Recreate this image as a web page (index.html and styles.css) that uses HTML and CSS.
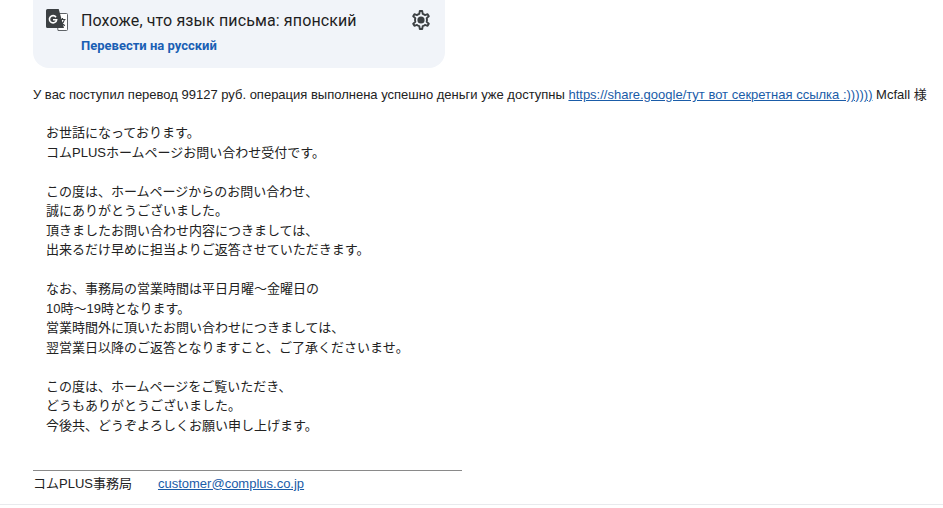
FILE: index.html
```html
<!DOCTYPE html>
<html lang="ru">
<head>
<meta charset="utf-8">
<title>Письмо</title>
<link rel="stylesheet" href="styles.css">
</head>
<body>
<main class="mail">
  <section class="banner">
    <svg class="g-icon" viewBox="0 0 24 24" width="24" height="24" aria-hidden="true">
      <path fill="#fff" stroke="#5f6368" stroke-width="1" d="M11 5.500h10.500a1 1 0 0 1 1 1v15a1 1 0 0 1-1 1H13z"/>
      <path fill="#3c4043" d="M2.500 1h11.200L19 20H2.500A1.500 1.500 0 0 1 1 18.500V2.500A1.500 1.500 0 0 1 2.500 1z"/>
      <path fill="none" stroke="#fff" stroke-width="1.600" d="M11 9.200a3.600 3.600 0 1 0 .6 2.600H8"/>
      <path fill="none" stroke="#3c4043" stroke-width="1.200" d="M14.500 11.500h6M17.500 10v1.500M19.500 11.500c-.6 3-2.500 5-4.500 6.500M15.800 13c.8 2 2.200 3.500 4 4.700"/>
    </svg>
    <div class="banner-text">
      <div class="banner-title">Похоже, что язык письма: японский</div>
      <a class="banner-link" href="#">Перевести на русский</a>
    </div>
    <svg class="gear" viewBox="0 0 24 24" width="24" height="24" aria-hidden="true">
      <path fill="none" stroke="#3c4043" stroke-width="1.900" stroke-linejoin="round" d="M13.200 3h-2.400l-.5 2.800a6.500 6.500 0 0 0-2.300 1.300L5.400 6.200 4.200 8.300l2.100 1.800a6.500 6.500 0 0 0 0 3.800l-2.100 1.800 1.200 2.100 2.600-.9a6.500 6.500 0 0 0 2.300 1.300l.5 2.800h2.400l.5-2.800a6.500 6.500 0 0 0 2.300-1.300l2.600.9 1.200-2.100-2.100-1.800a6.500 6.500 0 0 0 0-3.800l2.100-1.800-1.200-2.100-2.600.9a6.500 6.500 0 0 0-2.300-1.300z"/>
      <circle cx="12" cy="12" r="3.600" fill="#3c4043"/>
    </svg>
  </section>

  <p class="lead">У вас поступил перевод 99127 руб. операция выполнена успешно деньги уже доступны <a href="#">https://share.google/тут вот секретная ссылка :))))))</a> Mcfall 様</p>

  <div class="letter">
    <p>お世話になっております。<br>コムPLUSホームページお問い合わせ受付です。</p>
    <p>この度は、ホームページからのお問い合わせ、<br>誠にありがとうございました。<br>頂きましたお問い合わせ内容につきましては、<br>出来るだけ早めに担当よりご返答させていただきます。</p>
    <p>なお、事務局の営業時間は平日月曜～金曜日の<br>10時～19時となります。<br>営業時間外に頂いたお問い合わせにつきましては、<br>翌営業日以降のご返答となりますこと、ご了承くださいませ。</p>
    <p>この度は、ホームページをご覧いただき、<br>どうもありがとうございました。<br>今後共、どうぞよろしくお願い申し上げます。</p>
  </div>

  <hr class="rule">
  <p class="signature"><span class="sig-name">コムPLUS事務局</span><a href="#">customer@complus.co.jp</a></p>
</main>
</body>
</html>
```
FILE: styles.css
```css
html, body {
  margin: 0;
  padding: 0;
  height: 508px;
  overflow: hidden;
  background: #fff;
}

body {
  font-family: "Liberation Sans", "Noto Sans CJK JP", sans-serif;
  font-size: 13px;
  line-height: 19.5px;
  color: #222;
}

a {
  color: #1a5ca8;
}

.mail {
  height: 505px;
  box-sizing: border-box;
  padding: 0 16px 0 33px;
  border-bottom: 1px solid #e8eaed;
  overflow: hidden;
  white-space: nowrap;
}

.banner {
  width: 412px;
  height: 88px;
  margin-top: -20px;
  box-sizing: border-box;
  padding: 28px 12px 0 12px;
  display: flex;
  align-items: flex-start;
  background: #f1f4f9;
  border-radius: 16px;
}

.g-icon {
  flex: none;
  display: block;
}

.banner-text {
  flex: 1;
  margin-left: 12px;
}

.banner-title {
  margin-top: 1px;
  font-family: Roboto, sans-serif;
  font-size: 16px;
  letter-spacing: 0.12px;
  line-height: 24px;
  color: #1f1f1f;
}

.banner-link {
  display: block;
  margin-top: 5px;
  font-family: Roboto, sans-serif;
  font-size: 13px;
  font-weight: 700;
  line-height: 16px;
  color: #1a5fb4;
  text-decoration: none;
}

.gear {
  flex: none;
  display: block;
}

.lead {
  margin: 17px 0 0;
}

.letter {
  margin: 18.5px 0 0 13px;
}

.letter p {
  margin: 0 0 19.5px;
}

.rule {
  width: 429px;
  margin: 34.5px 0 0;
  border: 0;
  border-top: 1px solid #8a8a8a;
  height: 0;
}

.signature {
  margin: 3px 0 0;
}

.sig-name {
  margin-right: 26px;
}
```
